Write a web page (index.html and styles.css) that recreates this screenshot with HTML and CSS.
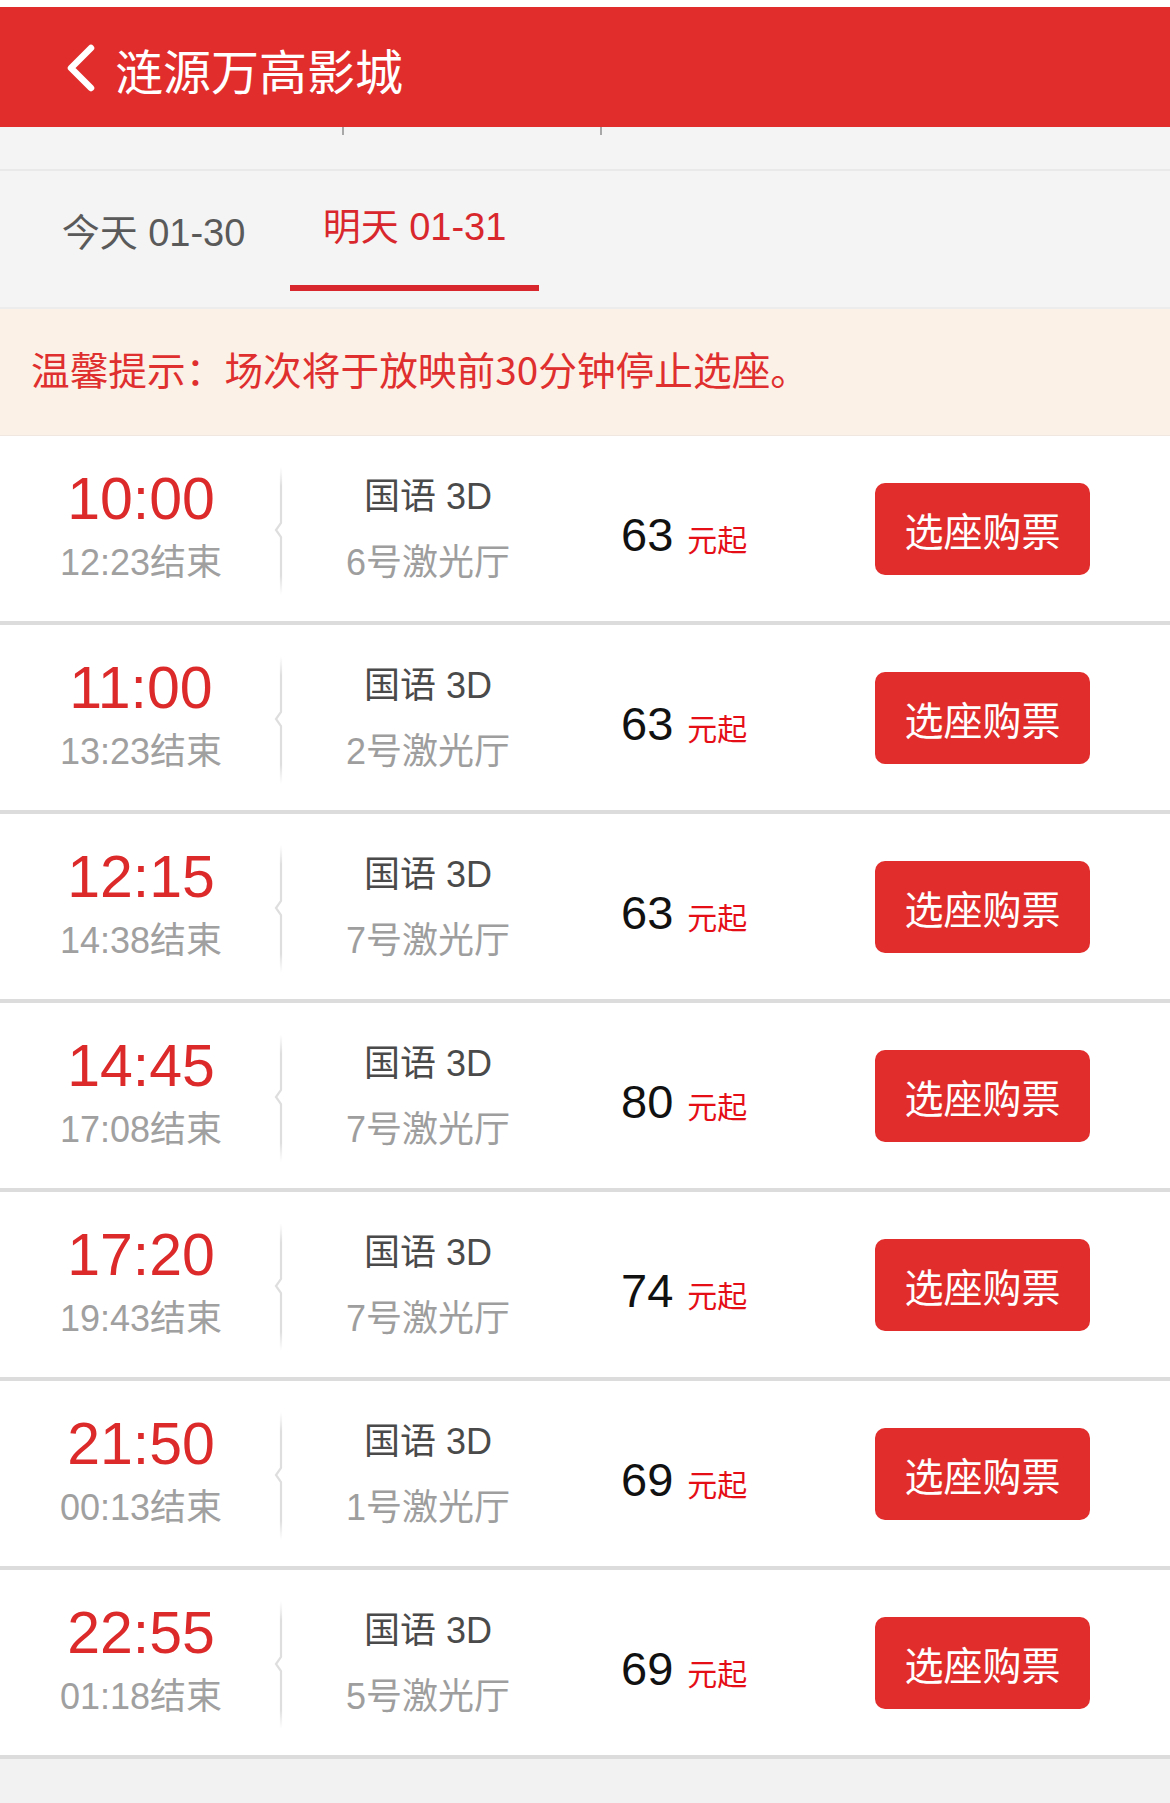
FILE: index.html
```html
<!DOCTYPE html>
<html lang="zh-CN">
<head>
<meta charset="utf-8">
<title>涟源万高影城</title>
<link rel="stylesheet" href="styles.css">
</head>
<body>
<div class="page">
  <div class="topgap"></div>
  <header class="header">
    <svg class="back" width="34" height="48" viewBox="0 0 34 48"><path d="M27 4 L7 24 L27 44" fill="none" stroke="#fff" stroke-width="6.5" stroke-linecap="round" stroke-linejoin="round"/></svg>
    <h1 class="title">涟源万高影城</h1>
  </header>
  <div class="substrip">
    <span class="tick tick1"></span>
    <span class="tick tick2"></span>
  </div>
  <nav class="tabs">
    <div class="tab">今天 01-30</div>
    <div class="tab active">明天 01-31</div>
  </nav>
  <div class="notice">温馨提示：场次将于放映前30分钟停止选座。</div>

  <ul class="list">
    <li class="row">
      <div class="time"><span class="start">10:00</span><span class="end">12:23结束</span></div>
      <svg class="divider" width="12" height="128" viewBox="0 0 12 128"><defs><linearGradient id="g1" x1="0" y1="0" x2="0" y2="1"><stop offset="0" stop-color="#e2e2e2" stop-opacity="0"/><stop offset="0.15" stop-color="#dedede"/><stop offset="0.85" stop-color="#dedede"/><stop offset="1" stop-color="#e2e2e2" stop-opacity="0"/></linearGradient></defs><path d="M7 0 V56 L2 63 L7 70 V128" fill="none" stroke="url(#g1)" stroke-width="2.2"/></svg>
      <div class="hall"><span class="lang">国语 3D</span><span class="room">6号激光厅</span></div>
      <div class="price"><span class="num">63</span><span class="unit">元起</span></div>
      <button class="buy">选座购票</button>
    </li>
    <li class="row">
      <div class="time"><span class="start">11:00</span><span class="end">13:23结束</span></div>
      <svg class="divider" width="12" height="128" viewBox="0 0 12 128"><path d="M7 0 V56 L2 63 L7 70 V128" fill="none" stroke="url(#g1)" stroke-width="2.2"/></svg>
      <div class="hall"><span class="lang">国语 3D</span><span class="room">2号激光厅</span></div>
      <div class="price"><span class="num">63</span><span class="unit">元起</span></div>
      <button class="buy">选座购票</button>
    </li>
    <li class="row">
      <div class="time"><span class="start">12:15</span><span class="end">14:38结束</span></div>
      <svg class="divider" width="12" height="128" viewBox="0 0 12 128"><path d="M7 0 V56 L2 63 L7 70 V128" fill="none" stroke="url(#g1)" stroke-width="2.2"/></svg>
      <div class="hall"><span class="lang">国语 3D</span><span class="room">7号激光厅</span></div>
      <div class="price"><span class="num">63</span><span class="unit">元起</span></div>
      <button class="buy">选座购票</button>
    </li>
    <li class="row">
      <div class="time"><span class="start">14:45</span><span class="end">17:08结束</span></div>
      <svg class="divider" width="12" height="128" viewBox="0 0 12 128"><path d="M7 0 V56 L2 63 L7 70 V128" fill="none" stroke="url(#g1)" stroke-width="2.2"/></svg>
      <div class="hall"><span class="lang">国语 3D</span><span class="room">7号激光厅</span></div>
      <div class="price"><span class="num">80</span><span class="unit">元起</span></div>
      <button class="buy">选座购票</button>
    </li>
    <li class="row">
      <div class="time"><span class="start">17:20</span><span class="end">19:43结束</span></div>
      <svg class="divider" width="12" height="128" viewBox="0 0 12 128"><path d="M7 0 V56 L2 63 L7 70 V128" fill="none" stroke="url(#g1)" stroke-width="2.2"/></svg>
      <div class="hall"><span class="lang">国语 3D</span><span class="room">7号激光厅</span></div>
      <div class="price"><span class="num">74</span><span class="unit">元起</span></div>
      <button class="buy">选座购票</button>
    </li>
    <li class="row">
      <div class="time"><span class="start">21:50</span><span class="end">00:13结束</span></div>
      <svg class="divider" width="12" height="128" viewBox="0 0 12 128"><path d="M7 0 V56 L2 63 L7 70 V128" fill="none" stroke="url(#g1)" stroke-width="2.2"/></svg>
      <div class="hall"><span class="lang">国语 3D</span><span class="room">1号激光厅</span></div>
      <div class="price"><span class="num">69</span><span class="unit">元起</span></div>
      <button class="buy">选座购票</button>
    </li>
    <li class="row">
      <div class="time"><span class="start">22:55</span><span class="end">01:18结束</span></div>
      <svg class="divider" width="12" height="128" viewBox="0 0 12 128"><path d="M7 0 V56 L2 63 L7 70 V128" fill="none" stroke="url(#g1)" stroke-width="2.2"/></svg>
      <div class="hall"><span class="lang">国语 3D</span><span class="room">5号激光厅</span></div>
      <div class="price"><span class="num">69</span><span class="unit">元起</span></div>
      <button class="buy">选座购票</button>
    </li>
  </ul>
  <div class="footer"></div>
</div>
</body>
</html>
```
FILE: styles.css
```css
* { box-sizing: border-box; }
html, body { margin: 0; padding: 0; }
body {
  background: #f3f3f3;
  font-family: "Liberation Sans", "Noto Sans CJK SC", sans-serif;
  width: 1170px;
  height: 1803px;
  overflow: hidden;
}
.page { width: 1170px; }
.topgap { height: 7px; background: #ffffff; }
.header {
  height: 120px;
  background: #e12e2c;
  display: flex;
  align-items: center;
  padding-left: 64px;
}
.back { flex: none; margin-top: 2px; }
.title {
  margin: 4px 0 0 17px;
  font-weight: normal;
  font-size: 48px;
  color: #ffffff;
  line-height: 1;
  font-family: "Noto Sans CJK SC", sans-serif;
}
.substrip {
  height: 44px;
  background: #f4f4f4;
  border-bottom: 2px solid #e9e9e9;
  display: flex;
  align-items: flex-start;
}
.tick { width: 2px; height: 8px; background: #a8a8a8; }
.tick1 { margin-left: 342px; }
.tick2 { margin-left: 256px; }
.tabs {
  height: 138px;
  background: #f4f4f4;
  border-bottom: 2px solid #ececec;
  display: flex;
  padding-left: 29px;
  gap: 12px;
}
.tab {
  width: 249px;
  height: 120px;
  text-align: center;
  font-size: 38px;
  color: #5a5a5a;
  padding-top: 40px;
  line-height: 44px;
}
.tab.active {
  color: #d9282d;
  padding-top: 34px;
  border-bottom: 6px solid #d9282d;
}
.notice {
  height: 127px;
  background: #fcf1e7;
  border-bottom: 1px solid #f0e8e0;
  color: #df2f2e;
  font-size: 38.7px;
  padding-left: 31px;
  padding-bottom: 8px;
  display: flex;
  align-items: center;
  font-family: "Noto Sans CJK SC", sans-serif;
}
.list { list-style: none; margin: 0; padding: 0; }
.row {
  height: 189px;
  background: #ffffff;
  border-bottom: 4px solid #dcdcdc;
  display: flex;
  align-items: center;
}
.time {
  width: 274px;
  display: flex;
  flex-direction: column;
  align-items: center;
  padding-top: 4px;
  padding-left: 8px;
}
.start {
  font-size: 59px;
  line-height: 64px;
  color: #dc2a2b;
}
.end {
  font-size: 36px;
  line-height: 64px;
  color: #a0a0a0;
}
.divider { flex: none; margin-top: 4px; }
.hall {
  width: 284px;
  display: flex;
  flex-direction: column;
  align-items: center;
  padding-top: 2px;
}
.lang {
  font-size: 36px;
  line-height: 66px;
  color: #4a4a4a;
}
.room {
  font-size: 36px;
  line-height: 66px;
  color: #9e9e9e;
}
.price {
  padding-left: 51px;
  padding-top: 12px;
  display: flex;
  align-items: baseline;
}
.num { font-size: 47px; color: #111111; }
.unit { font-size: 30px; color: #e50e17; margin-left: 14px; font-family: "Noto Sans CJK SC", sans-serif; }
.buy {
  margin-left: auto;
  margin-right: 80px;
  width: 215px;
  height: 92px;
  border: none;
  border-radius: 10px;
  background: #e12e2d;
  color: #ffffff;
  font-size: 39px;
  font-family: "Noto Sans CJK SC", sans-serif;
  padding: 0;
  margin-top: 0;
}
.footer { height: 60px; background: #f2f2f2; }
```
